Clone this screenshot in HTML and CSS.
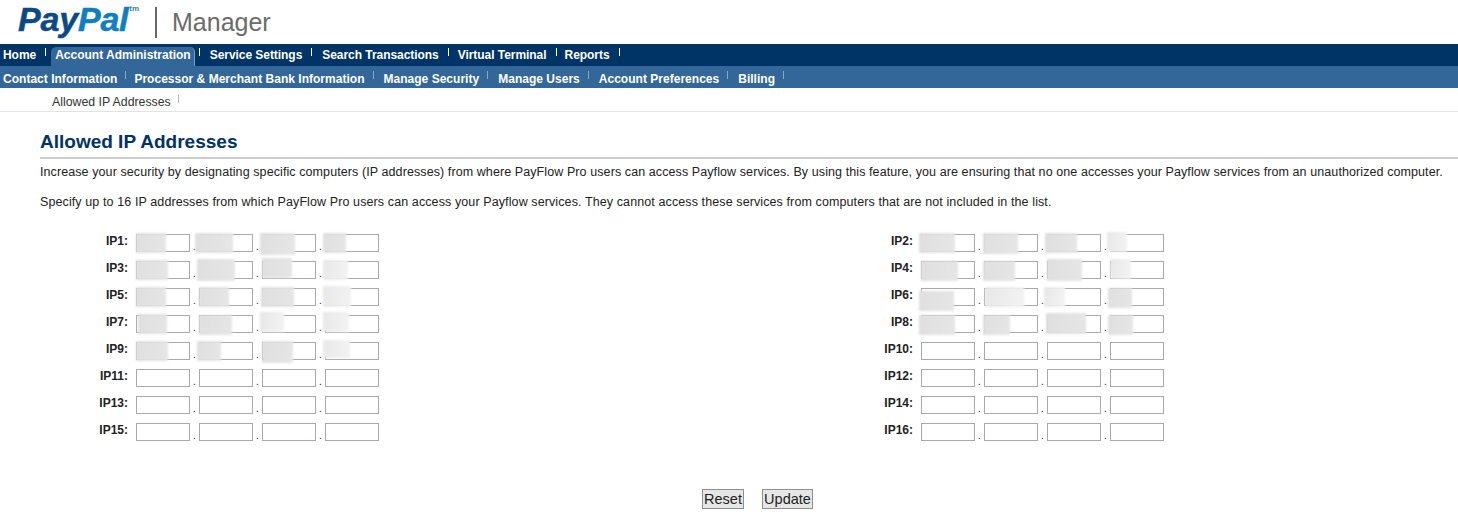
FILE: index.html
```html
<!DOCTYPE html>
<html lang="en">
<head>
<meta charset="utf-8">
<title>Allowed IP Addresses</title>
<link rel="stylesheet" href="styles.css">
</head>
<body>
<header class="brand">
  <span class="logo"><span class="logo-pay">Pay</span><span class="logo-pal">Pal</span><span class="logo-tm">tm</span></span>
  <span class="brand-rule"></span>
  <span class="brand-name">Manager</span>
</header>
<nav class="nav nav-main">
  <a class="nav-item">Home</a>
  <a class="nav-item nav-active">Account Administration</a>
  <a class="nav-item">Service Settings</a>
  <a class="nav-item">Search Transactions</a>
  <a class="nav-item">Virtual Terminal</a>
  <a class="nav-item">Reports</a>
</nav>
<nav class="nav nav-sub">
  <a class="nav-item">Contact Information</a>
  <a class="nav-item">Processor &amp; Merchant Bank Information</a>
  <a class="nav-item">Manage Security</a>
  <a class="nav-item">Manage Users</a>
  <a class="nav-item">Account Preferences</a>
  <a class="nav-item">Billing</a>
</nav>
<nav class="nav-third"><a class="nav-item">Allowed IP Addresses</a></nav>
<main class="content">
  <h1 class="title">Allowed IP Addresses</h1>
  <p class="intro">Increase your security by designating specific computers (IP addresses) from where PayFlow Pro users can access Payflow services. By using this feature, you are ensuring that no one accesses your Payflow services from an unauthorized computer.</p>
  <p class="intro second">Specify up to 16 IP addresses from which PayFlow Pro users can access your Payflow services. They cannot access these services from computers that are not included in the list.</p>
  <form class="ip-form">
    <div class="ip-grid" id="grid">
      <div class="ip-row"><label class="ip-label">IP1:</label><span class="octet"><input class="ip-input"><i class="smudge" style="left:0;top:-1px;width:30px;height:20px"></i></span><span class="octet"><input class="ip-input"><i class="smudge" style="left:-4px;top:-1px;width:38px;height:20px"></i></span><span class="octet"><input class="ip-input"><i class="smudge" style="left:-2px;top:-1px;width:35px;height:22px"></i></span><span class="octet"><input class="ip-input"><i class="smudge" style="left:-2px;top:-1px;width:23px;height:20px"></i></span></div>
      <div class="ip-row"><label class="ip-label">IP2:</label><span class="octet"><input class="ip-input"><i class="smudge" style="left:-2px;top:-1px;width:36px;height:20px"></i></span><span class="octet"><input class="ip-input"><i class="smudge" style="left:-1px;top:-1px;width:35px;height:21px"></i></span><span class="octet"><input class="ip-input"><i class="smudge" style="left:-2px;top:-1px;width:32px;height:20px"></i></span><span class="octet"><input class="ip-input"><i class="smudge light" style="left:-3px;top:-2px;width:20px;height:20px"></i></span></div>
      <div class="ip-row"><label class="ip-label">IP3:</label><span class="octet"><input class="ip-input"><i class="smudge" style="left:0;top:-1px;width:32px;height:20px"></i></span><span class="octet"><input class="ip-input"><i class="smudge" style="left:-2px;top:-2px;width:38px;height:22px"></i></span><span class="octet"><input class="ip-input"><i class="smudge" style="left:0;top:-3px;width:30px;height:20px"></i></span><span class="octet"><input class="ip-input"><i class="smudge light" style="left:-2px;top:-1px;width:25px;height:20px"></i></span></div>
      <div class="ip-row"><label class="ip-label">IP4:</label><span class="octet"><input class="ip-input"><i class="smudge" style="left:0;top:0;width:37px;height:20px"></i></span><span class="octet"><input class="ip-input"><i class="smudge" style="left:-1px;top:0;width:32px;height:20px"></i></span><span class="octet"><input class="ip-input"><i class="smudge" style="left:0;top:-2px;width:35px;height:22px"></i></span><span class="octet"><input class="ip-input"><i class="smudge light" style="left:0;top:-2px;width:21px;height:20px"></i></span></div>
      <div class="ip-row"><label class="ip-label">IP5:</label><span class="octet"><input class="ip-input"><i class="smudge" style="left:0;top:-1px;width:30px;height:20px"></i></span><span class="octet"><input class="ip-input"><i class="smudge" style="left:0;top:-1px;width:30px;height:20px"></i></span><span class="octet"><input class="ip-input"><i class="smudge" style="left:-1px;top:-1px;width:33px;height:20px"></i></span><span class="octet"><input class="ip-input"><i class="smudge light" style="left:-2px;top:-2px;width:28px;height:21px"></i></span></div>
      <div class="ip-row"><label class="ip-label">IP6:</label><span class="octet"><input class="ip-input"><i class="smudge" style="left:-2px;top:3px;width:35px;height:20px"></i></span><span class="octet"><input class="ip-input"><i class="smudge light" style="left:1px;top:-1px;width:39px;height:20px"></i></span><span class="octet"><input class="ip-input"><i class="smudge light" style="left:-3px;top:-1px;width:21px;height:20px"></i></span><span class="octet"><input class="ip-input"><i class="smudge" style="left:-2px;top:0;width:24px;height:20px"></i></span></div>
      <div class="ip-row"><label class="ip-label">IP7:</label><span class="octet"><input class="ip-input"><i class="smudge" style="left:2px;top:-1px;width:29px;height:20px"></i></span><span class="octet"><input class="ip-input"><i class="smudge" style="left:0;top:0;width:33px;height:20px"></i></span><span class="octet"><input class="ip-input"><i class="smudge light" style="left:-2px;top:-3px;width:24px;height:20px"></i></span><span class="octet"><input class="ip-input"><i class="smudge light" style="left:-2px;top:-3px;width:26px;height:20px"></i></span></div>
      <div class="ip-row"><label class="ip-label">IP8:</label><span class="octet"><input class="ip-input"><i class="smudge" style="left:-2px;top:0;width:36px;height:20px"></i></span><span class="octet"><input class="ip-input"><i class="smudge" style="left:-1px;top:0;width:27px;height:20px"></i></span><span class="octet"><input class="ip-input"><i class="smudge" style="left:-1px;top:-2px;width:40px;height:21px"></i></span><span class="octet"><input class="ip-input"><i class="smudge" style="left:-2px;top:0;width:25px;height:20px"></i></span></div>
      <div class="ip-row"><label class="ip-label">IP9:</label><span class="octet"><input class="ip-input"><i class="smudge" style="left:0;top:-1px;width:32px;height:20px"></i></span><span class="octet"><input class="ip-input"><i class="smudge" style="left:-2px;top:-1px;width:24px;height:20px"></i></span><span class="octet"><input class="ip-input"><i class="smudge" style="left:0;top:-1px;width:31px;height:22px"></i></span><span class="octet"><input class="ip-input"><i class="smudge light" style="left:-2px;top:-2px;width:27px;height:18px"></i></span></div>
      <div class="ip-row"><label class="ip-label">IP10:</label><span class="octet"><input class="ip-input"></span><span class="octet"><input class="ip-input"></span><span class="octet"><input class="ip-input"></span><span class="octet"><input class="ip-input"></span></div>
      <div class="ip-row"><label class="ip-label">IP11:</label><span class="octet"><input class="ip-input"></span><span class="octet"><input class="ip-input"></span><span class="octet"><input class="ip-input"></span><span class="octet"><input class="ip-input"></span></div>
      <div class="ip-row"><label class="ip-label">IP12:</label><span class="octet"><input class="ip-input"></span><span class="octet"><input class="ip-input"></span><span class="octet"><input class="ip-input"></span><span class="octet"><input class="ip-input"></span></div>
      <div class="ip-row"><label class="ip-label">IP13:</label><span class="octet"><input class="ip-input"></span><span class="octet"><input class="ip-input"></span><span class="octet"><input class="ip-input"></span><span class="octet"><input class="ip-input"></span></div>
      <div class="ip-row"><label class="ip-label">IP14:</label><span class="octet"><input class="ip-input"></span><span class="octet"><input class="ip-input"></span><span class="octet"><input class="ip-input"></span><span class="octet"><input class="ip-input"></span></div>
      <div class="ip-row"><label class="ip-label">IP15:</label><span class="octet"><input class="ip-input"></span><span class="octet"><input class="ip-input"></span><span class="octet"><input class="ip-input"></span><span class="octet"><input class="ip-input"></span></div>
      <div class="ip-row"><label class="ip-label">IP16:</label><span class="octet"><input class="ip-input"></span><span class="octet"><input class="ip-input"></span><span class="octet"><input class="ip-input"></span><span class="octet"><input class="ip-input"></span></div>
    </div>
    <div class="actions">
      <button type="button" class="btn">Reset</button>
      <button type="button" class="btn">Update</button>
    </div>
  </form>
</main>
</body>
</html>
```

FILE: styles.css
```css
* { box-sizing: border-box; }
html, body { margin: 0; padding: 0; height: 516px; overflow: hidden; background: #fff; }
body { font-family: "Liberation Sans", Arial, sans-serif; font-size: 12px; color: #222; }

.brand { height: 44px; display: flex; align-items: flex-start; padding-left: 18px; }
.logo { font-size: 34px; line-height: 38px; font-weight: bold; font-style: italic; letter-spacing: -0.2px; width: 122px; display: flex; -webkit-text-stroke: 0.5px currentColor; }
.logo-pay { color: #0b4a85; }
.logo-pal { color: #0f7fc0; }
.logo-tm { font-size: 8px; line-height: 18px; font-style: normal; font-weight: bold; letter-spacing: 0; color: #4a7aa6; margin-left: 1px; -webkit-text-stroke: 0; }
.brand-rule { width: 2px; height: 31px; margin: 7px 0 0 15px; background: #666; }
.brand-name { font-size: 25px; line-height: 30px; margin: 7px 0 0 15px; color: #6b6b6b; }

.nav { display: flex; align-items: flex-start; height: 22px; font-weight: bold; line-height: 22px; color: #fff; }
.nav-item { display: block; position: relative; white-space: nowrap; }
.nav-item::after { content: ""; position: absolute; top: 4px; right: 0; width: 1px; height: 8px; background: currentColor; }
.nav-main { background: #003366; letter-spacing: -0.05px; }
.nav-main .nav-item { padding: 0 10px 0 3px; margin-right: 7px; }
.nav-main .nav-item:nth-child(4) { margin-right: 6px; }
.nav-main .nav-item:nth-child(5) { margin-right: 5px; }
.nav-main .nav-item.nav-active { background: #369; border-radius: 5px 5px 0 0; margin: 3px 12px 0 -2px; height: 19px; line-height: 16px; padding: 0 3px 0 4px; border-right: 1px solid #7f9cbc; letter-spacing: 0; }
.nav-main .nav-active::after { top: 1px; right: -6px; }
.nav-sub { background: #336699; letter-spacing: 0.02px; }
.nav-sub .nav-item { padding: 2px 9px 0 3px; margin-right: 7px; }
.nav-sub .nav-item:first-child { margin-right: 5px; }
.nav-sub .nav-item::after { background: #8ea9c6; top: 5px; }
.nav-third { height: 24px; border-bottom: 1px solid #e3e3e3; padding-left: 49px; font-size: 12.3px; line-height: 29px; color: #333; display: flex; }
.nav-third .nav-item { padding: 0 8px 0 3px; }
.nav-third .nav-item::after { background: #bbb; top: 7px; }

.content { padding-left: 40px; }
.title { margin: 0; padding-top: 18px; height: 47px; border-bottom: 2px solid #ccc; font-size: 19px; line-height: 24px; font-weight: bold; color: #003366; }
.intro { margin: 0; padding-top: 5px; font-size: 12.5px; letter-spacing: 0.09px; line-height: 16px; height: 21px; white-space: nowrap; }
.second { padding-top: 0; margin-top: 15px; line-height: 15px; letter-spacing: 0.105px; }

.ip-grid { display: grid; grid-template-columns: 785px 633px; grid-auto-rows: 27px; margin-top: 18px; }
.ip-row { display: flex; align-items: flex-start; }
.ip-label { width: 88px; text-align: right; font-weight: bold; line-height: 14px; margin-right: 8px; }
.octet { position: relative; width: 54px; height: 18px; margin-right: 9px; }
.octet + .octet::before { content: "."; position: absolute; left: -6px; top: 6px; line-height: 14px; font-size: 10px; color: #222; }
.ip-input { display: block; width: 54px; height: 18px; padding: 0; margin: 0; border: 1px solid #a9a9a9; background: #fff; border-radius: 0; outline: 0; }
.smudge { position: absolute; background: linear-gradient(100deg, #dfdfdf, #e6e6e6); filter: blur(1px); }
.smudge.light { background: linear-gradient(100deg, #e8e8e8, #f3f3f3); }

.actions { display: flex; justify-content: center; gap: 18px; margin-top: 39px; padding-left: 17px; }
.btn { width: 42px; height: 20px; padding: 0; background: #e6e6e6; border: 1px solid #8f8f8f; border-radius: 0; font: 14.5px/18px "Liberation Sans", Arial, sans-serif; color: #222; }
.btn + .btn { width: 51px; }
```
